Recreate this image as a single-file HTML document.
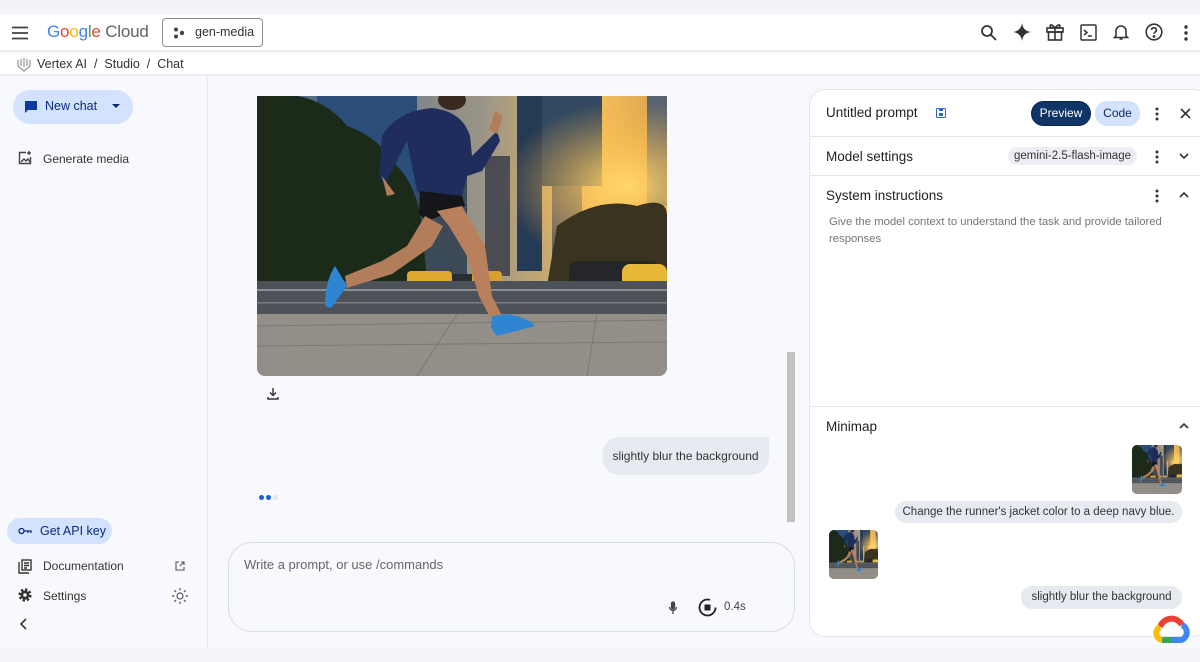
<!DOCTYPE html>
<html><head><meta charset="utf-8"><style>
*{box-sizing:border-box;margin:0;padding:0}
body{width:1200px;height:662px;overflow:hidden;background:#f8f9fc;font-family:"Liberation Sans",Arial,sans-serif;color:#1f1f1f;position:relative}
.abs{position:absolute}
.ic{position:absolute}
</style></head><body>
<svg width="0" height="0" style="position:absolute">
<defs>
<symbol id="scene" viewBox="0 0 410 280" preserveAspectRatio="none">
<linearGradient id="sky" x1="0" y1="0" x2="1" y2="0"><stop offset="0" stop-color="#3d5f88"/><stop offset=".55" stop-color="#9b9588"/><stop offset=".85" stop-color="#f0bc5a"/><stop offset="1" stop-color="#d8a050"/></linearGradient>
<radialGradient id="sun" cx=".9" cy=".32" r=".3"><stop offset="0" stop-color="#ffd76a" stop-opacity="1"/><stop offset="1" stop-color="#ffb040" stop-opacity="0"/></radialGradient>
<rect width="410" height="280" fill="url(#sky)"/>
<rect x="60" y="0" width="100" height="120" fill="#2b4e78"/>
<rect x="160" y="60" width="50" height="130" fill="#3c4a58"/>
<rect x="228" y="60" width="25" height="120" fill="#4b4c52"/>
<rect x="260" y="0" width="25" height="175" fill="#253a55"/>
<rect x="285" y="0" width="60" height="90" fill="#33495f"/>
<rect x="295" y="90" width="30" height="80" fill="#5a5e66"/>
<rect x="390" y="0" width="20" height="110" fill="#5a6470"/>
<rect width="410" height="280" fill="url(#sun)"/>
<path d="M0 0 L40 0 Q70 5 90 30 Q120 40 140 70 Q160 90 165 130 L170 185 L0 188Z" fill="#1c2a1a"/>
<path d="M300 130 Q340 100 380 110 Q410 100 410 120 L410 190 L290 190Z" fill="#3a3320"/>
<rect x="150" y="175" width="45" height="14" rx="4" fill="#e0a830"/>
<rect x="195" y="178" width="20" height="10" fill="#2a2e34"/>
<rect x="215" y="175" width="30" height="13" rx="4" fill="#d9a030"/>
<rect x="312" y="165" width="90" height="28" rx="8" fill="#24262a"/>
<rect x="365" y="168" width="45" height="27" rx="8" fill="#e8b838"/>
<rect x="0" y="185" width="410" height="35" fill="#4d5158"/>
<rect x="0" y="193" width="410" height="2" fill="#8b8e92"/>
<rect x="0" y="206" width="410" height="1.5" fill="#7a7d80"/>
<rect x="0" y="218" width="410" height="62" fill="#938f88"/>
<path d="M0 230 L410 224 M0 250 L410 246 M200 218 L160 280 M340 218 L330 280" stroke="#7a7672" stroke-width="1"/>
<ellipse cx="195" cy="4" rx="14" ry="10" fill="#3a2a22"/>
<path d="M125 40 Q140 15 175 12 Q205 15 213 40 L215 60 L225 50 L240 35 L243 45 L225 75 L210 80 L205 100 L165 100 L160 95 L150 45 L132 80 L128 90 L122 80Z" fill="#1e2d5c"/>
<path d="M163 95 L205 100 L208 110 L170 125 L162 118Z" fill="#15161a"/>
<path d="M168 120 L150 150 L125 165 L88 180 L90 192 L135 178 L175 150 L186 130Z" fill="#b27d5a"/>
<path d="M180 115 L205 110 L228 150 L235 200 L245 220 L235 225 L222 200 L210 160 L192 130Z" fill="#b8805c"/>
<path d="M78 170 Q68 185 68 210 L74 212 L90 190 Z" fill="#2e86d2"/>
<path d="M235 220 L250 218 Q272 222 278 230 L240 240 L234 232Z" fill="#2e86d2"/>
<path d="M125 80 L130 100 L138 98Z" fill="#b27d5a"/>
<path d="M238 15 L246 20 L240 38 L232 34Z" fill="#b27d5a"/>
</symbol>
</defs></svg>

<div class="abs" style="left:0;top:0;width:1200px;height:14px;background:#f1f3f7"></div>
<div class="abs" style="left:0;top:14px;width:1200px;height:38px;background:#fff;border-bottom:2px solid #eceef2"></div>
<svg class="ic" style="left:12px;top:26px" width="16" height="14"><path d="M0 1.5h16M0 7h16M0 12.5h16" stroke="#444" stroke-width="1.8"/></svg>
<div class="abs" style="left:47px;top:22px;font-size:17px;letter-spacing:-0.2px"><span style="color:#4285f4">G</span><span style="color:#ea4335">o</span><span style="color:#fbbc05">o</span><span style="color:#4285f4">g</span><span style="color:#34a853">l</span><span style="color:#ea4335">e</span> <span style="color:#5f6368">Cloud</span></div>
<div class="abs" style="left:162px;top:18px;width:101px;height:29px;border:1px solid #8a8d91;border-radius:4px;font-size:12.5px;line-height:27px;padding-left:32px;color:#333">gen-media</div>
<svg class="ic" style="left:173px;top:27px" width="12" height="12"><circle cx="3" cy="2.5" r="2" fill="#444"/><circle cx="9" cy="6" r="2.2" fill="#444"/><circle cx="3" cy="9.5" r="2" fill="#444"/></svg>
<svg class="ic" style="left:980px;top:24px" width="18" height="18" fill="none" stroke="#333" stroke-width="1.8"><circle cx="7" cy="7" r="5"/><path d="M11 11l5 5"/></svg>
<svg class="ic" style="left:1013px;top:23px" width="18" height="18"><path d="M9 0Q10 8 18 9Q10 10 9 18Q8 10 0 9Q8 8 9 0Z" fill="#333"/></svg>
<svg class="ic" style="left:1046px;top:23px" width="18" height="18" fill="none" stroke="#333" stroke-width="1.6"><rect x="1" y="5" width="16" height="4"/><rect x="2.5" y="9" width="13" height="8"/><path d="M9 5v12M9 5Q5 0 4 3Q4 5 9 5Q13 0 14 3Q14 5 9 5"/></svg>
<svg class="ic" style="left:1080px;top:24px" width="17" height="17" fill="none" stroke="#333" stroke-width="1.5"><rect x="1" y="1" width="15" height="15" rx="1"/><path d="M4 6l3 2.5-3 2.5M8 12h4"/></svg>
<svg class="ic" style="left:1113px;top:23px" width="16" height="18" fill="none" stroke="#333" stroke-width="1.6"><path d="M3 13V8a5 5 0 0110 0v5l1.5 1.5h-13zM6.5 16h3"/></svg>
<svg class="ic" style="left:1145px;top:23px" width="18" height="18" fill="none" stroke="#333" stroke-width="1.6"><circle cx="9" cy="9" r="7.8"/><path d="M6.5 7a2.5 2.5 0 115 .3c0 1.5-2.5 1.8-2.5 3.5"/><circle cx="9" cy="13.5" r=".6" fill="#333"/></svg>
<svg class="ic" style="left:1184px;top:25px" width="4" height="16"><circle cx="2" cy="2" r="1.7" fill="#333"/><circle cx="2" cy="8" r="1.7" fill="#333"/><circle cx="2" cy="14" r="1.7" fill="#333"/></svg>

<div class="abs" style="left:0;top:53px;width:1200px;height:23px;background:#fff;border-bottom:2px solid #eceef2"></div>
<svg class="ic" style="left:17px;top:57px" width="14" height="15" fill="none" stroke="#888" stroke-width="1.1"><path d="M1 3v6l6 5 6-5V3M4 2v7M7 1v9M10 2v7"/></svg>
<div class="abs" style="left:37px;top:57px;font-size:12.5px;color:#333">Vertex AI &nbsp;/&nbsp; Studio &nbsp;/&nbsp; Chat</div>

<div class="abs" style="left:207px;top:77px;width:1px;height:570px;background:#e6e8ee"></div>
<div class="abs" style="left:13px;top:90px;width:120px;height:34px;background:#d3e3fd;border-radius:17px"></div>
<svg class="ic" style="left:24px;top:100px" width="14" height="14"><path d="M1 1h12v9H4l-3 3z" fill="#0b3aa0"/></svg>
<div class="abs" style="left:45px;top:99px;font-size:12.5px;color:#0b2a7a">New chat</div>
<svg class="ic" style="left:112px;top:104px" width="8" height="5"><path d="M0 0h8L4 4z" fill="#0b2a7a"/></svg>
<svg class="ic" style="left:18px;top:151px" width="14" height="14" fill="none" stroke="#444" stroke-width="1.4"><path d="M8 1.5H1.5v11h11V6"/><path d="M3 11l3-3 2 2 2-2 2 3" /><path d="M11 0v4M9 2h4"/></svg>
<div class="abs" style="left:43px;top:152px;font-size:12px;color:#333">Generate media</div>
<div class="abs" style="left:7px;top:518px;width:105px;height:26px;background:#d3e3fd;border-radius:13px"></div>
<svg class="ic" style="left:18px;top:527px" width="14" height="8" fill="none" stroke="#0b2a7a" stroke-width="1.3"><circle cx="3.5" cy="4" r="2.5"/><path d="M6 4h7v2M10 4v2"/></svg>
<div class="abs" style="left:40px;top:524px;font-size:12.5px;color:#0b2a7a">Get API key</div>
<svg class="ic" style="left:18px;top:559px" width="14" height="15" fill="none" stroke="#333" stroke-width="1.4"><path d="M1 3v11h10"/><rect x="4" y="1" width="9" height="10"/><path d="M6 4h5M6 6.5h5M6 9h3"/></svg>
<div class="abs" style="left:43px;top:559px;font-size:12px;color:#333">Documentation</div>
<svg class="ic" style="left:175px;top:561px" width="10" height="10" fill="none" stroke="#555" stroke-width="1.1"><path d="M4 1H1v8h8V6M5 5l4-4M6 1h3v3"/></svg>
<svg class="ic" style="left:18px;top:588px" width="14" height="14"><circle cx="7" cy="7" r="5" fill="none" stroke="#333" stroke-width="3.2" stroke-dasharray="2.2 1.7"/><circle cx="7" cy="7" r="4.5" fill="#333"/><circle cx="7" cy="7" r="1.8" fill="#f8f9fc"/></svg>
<div class="abs" style="left:43px;top:589px;font-size:12px;color:#333">Settings</div>
<svg class="ic" style="left:172px;top:588px" width="16" height="16" fill="none" stroke="#555" stroke-width="1.2"><circle cx="8" cy="8" r="3"/><path d="M8 0v2.5M8 13.5V16M0 8h2.5M13.5 8H16M2.3 2.3l1.8 1.8M11.9 11.9l1.8 1.8M2.3 13.7l1.8-1.8M11.9 4.1l1.8-1.8"/></svg>
<svg class="ic" style="left:19px;top:618px" width="8" height="12" fill="none" stroke="#333" stroke-width="1.6"><path d="M7 1L2 6l5 5"/></svg>

<div class="abs" style="left:257px;top:96px;width:410px;height:280px;border-radius:0 0 8px 8px;overflow:hidden"><svg width="410" height="280"><use href="#scene"/></svg></div>
<svg class="ic" style="left:267px;top:388px" width="12" height="12" fill="none" stroke="#333" stroke-width="1.4"><path d="M6 0v7M3 4.5L6 7.5 9 4.5M1 9v2h10V9"/></svg>
<div class="abs" style="left:602px;top:437px;width:167px;height:38px;background:#e8eaf2;border-radius:18px 0 18px 18px;font-size:12px;line-height:39px;text-align:center;color:#333">slightly blur the background</div>
<div class="abs" style="left:259px;top:495px;width:5px;height:5px;border-radius:50%;background:#1a5fd6"></div>
<div class="abs" style="left:266px;top:495px;width:5px;height:5px;border-radius:50%;background:#1a5fd6"></div>
<div class="abs" style="left:273px;top:495px;width:5px;height:5px;border-radius:50%;background:#e4e7ee"></div>
<div class="abs" style="left:787px;top:352px;width:8px;height:170px;background:#c2c2c2"></div>
<div class="abs" style="left:228px;top:542px;width:567px;height:90px;border:1px solid #dadde3;border-radius:24px;background:#f8f9fc"></div>
<div class="abs" style="left:244px;top:557px;font-size:13px;color:#666">Write a prompt, or use /commands</div>
<svg class="ic" style="left:668px;top:601px" width="10" height="14" fill="none" stroke="#444" stroke-width="1.3"><rect x="3.5" y="1" width="3" height="7" rx="1.5" fill="#444"/><path d="M1.5 6a3.5 3.5 0 007 0M5 10v3"/></svg>
<svg class="ic" style="left:698px;top:598px" width="19" height="19"><circle cx="9.5" cy="9.5" r="8" fill="none" stroke="#222" stroke-width="1.8" stroke-dasharray="40 10"/><rect x="6.5" y="6.5" width="6" height="6" fill="#222"/></svg>
<div class="abs" style="left:724px;top:601px;font-size:11.5px;color:#444">0.4s</div>

<div class="abs" style="left:809px;top:89px;width:400px;height:548px;background:#fff;border:1px solid #e3e6ee;border-radius:16px"></div>
<div class="abs" style="left:826px;top:105px;font-size:13.5px;color:#1f1f1f">Untitled prompt</div>
<svg class="ic" style="left:936px;top:108px" width="10" height="10"><rect x=".5" y=".5" width="9" height="9" rx="1" fill="none" stroke="#2b63d6"/><rect x="3" y="5" width="4" height="3" fill="#2b63d6"/><rect x="3" y="1" width="4" height="2" fill="#2b63d6"/></svg>
<div class="abs" style="left:1031px;top:101px;width:60px;height:25px;background:#0f3466;border:1.5px solid #0a2550;border-radius:13px;color:#fff;font-size:12px;line-height:22px;text-align:center">Preview</div>
<div class="abs" style="left:1095px;top:101px;width:45px;height:25px;background:#d3e3fd;border-radius:12px;color:#0b2a6a;font-size:12px;line-height:25px;text-align:center">Code</div>
<svg class="ic" style="left:1155px;top:107px" width="4" height="14"><circle cx="2" cy="2" r="1.5" fill="#333"/><circle cx="2" cy="7" r="1.5" fill="#333"/><circle cx="2" cy="12" r="1.5" fill="#333"/></svg>
<svg class="ic" style="left:1180px;top:108px" width="11" height="11" stroke="#333" stroke-width="1.6"><path d="M1 1l9 9M10 1l-9 9"/></svg>
<div class="abs" style="left:810px;top:136px;width:390px;height:1px;background:#e3e6ee"></div>
<div class="abs" style="left:826px;top:149px;font-size:13.5px">Model settings</div>
<div class="abs" style="left:1008px;top:147px;width:129px;height:18px;background:#eceef4;border-radius:9px;font-size:11.5px;line-height:18px;text-align:center;color:#333">gemini-2.5-flash-image</div>
<svg class="ic" style="left:1155px;top:150px" width="4" height="14"><circle cx="2" cy="2" r="1.5" fill="#333"/><circle cx="2" cy="7" r="1.5" fill="#333"/><circle cx="2" cy="12" r="1.5" fill="#333"/></svg>
<svg class="ic" style="left:1179px;top:153px" width="10" height="6" fill="none" stroke="#333" stroke-width="1.6"><path d="M1 1l4 4 4-4"/></svg>
<div class="abs" style="left:810px;top:175px;width:390px;height:1px;background:#e3e6ee"></div>
<div class="abs" style="left:826px;top:188px;font-size:13.5px">System instructions</div>
<svg class="ic" style="left:1155px;top:189px" width="4" height="14"><circle cx="2" cy="2" r="1.5" fill="#333"/><circle cx="2" cy="7" r="1.5" fill="#333"/><circle cx="2" cy="12" r="1.5" fill="#333"/></svg>
<svg class="ic" style="left:1179px;top:192px" width="10" height="6" fill="none" stroke="#333" stroke-width="1.6"><path d="M1 5l4-4 4 4"/></svg>
<div class="abs" style="left:829px;top:214px;width:360px;font-size:11.3px;line-height:16.5px;color:#757575">Give the model context to understand the task and provide tailored responses</div>
<div class="abs" style="left:810px;top:406px;width:390px;height:1px;background:#e3e6ee"></div>
<div class="abs" style="left:826px;top:419px;font-size:13.5px">Minimap</div>
<svg class="ic" style="left:1179px;top:423px" width="10" height="6" fill="none" stroke="#333" stroke-width="1.6"><path d="M1 5l4-4 4 4"/></svg>
<div class="abs" style="left:1132px;top:445px;width:50px;height:49px;border-radius:5px;overflow:hidden"><svg width="50" height="49"><use href="#scene"/></svg></div>
<div class="abs" style="left:895px;top:501px;width:287px;height:22px;background:#e8eaf2;border-radius:11px;font-size:11.5px;line-height:22px;text-align:center;color:#333">Change the runner's jacket color to a deep navy blue.</div>
<div class="abs" style="left:829px;top:530px;width:49px;height:49px;border-radius:5px;overflow:hidden"><svg width="49" height="49"><use href="#scene"/></svg></div>
<div class="abs" style="left:1021px;top:586px;width:161px;height:23px;background:#e8eaf2;border-radius:11px;font-size:11.5px;line-height:23px;text-align:center;color:#333">slightly blur the background</div>
<div class="abs" style="left:0;top:648px;width:1200px;height:14px;background:#f3f4f7"></div>
<svg class="ic" style="left:1152px;top:613px" width="38" height="30" viewBox="0 0 38 30"><path d="M8 14A12 12 0 0130 12" fill="none" stroke="#ea4335" stroke-width="6"/><path d="M30 12A8 8 0 0129 27H20" fill="none" stroke="#4285f4" stroke-width="6"/><path d="M20 27H10" fill="none" stroke="#34a853" stroke-width="6"/><path d="M10 27A7 7 0 018 14" fill="none" stroke="#fbbc05" stroke-width="6"/></svg>
</body></html>
